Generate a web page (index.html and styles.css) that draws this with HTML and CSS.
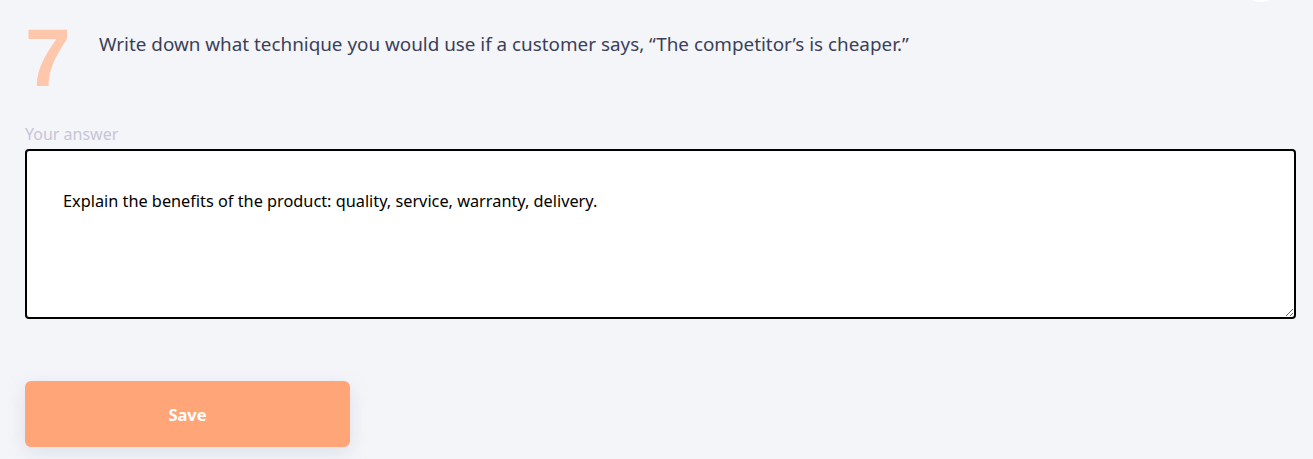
FILE: index.html
```html
<!DOCTYPE html>
<html>
<head>
<meta charset="utf-8">
<link rel="stylesheet" href="styles.css">
</head>
<body>
<div class="page">
  <span class="corner-dot"></span>
  <div class="question">
    <div class="num">7</div>
    <div class="qtext">Write down what technique you would use if a customer says, “The competitor’s is cheaper.”</div>
  </div>
  <label class="label" for="ans">Your answer</label>
  <textarea id="ans" class="answer">Explain the benefits of the product: quality, service, warranty, delivery.</textarea>
  <button class="save">Save</button>
</div>
</body>
</html>
```
FILE: styles.css
```css
html, body {
  margin: 0;
  padding: 0;
  background: #f4f5f9;
}
.page {
  position: relative;
  width: 1313px;
  height: 459px;
  overflow: hidden;
  padding: 0 17px 0 25px;
  box-sizing: border-box;
  font-family: "Noto Sans", "Open Sans", sans-serif;
}
.corner-dot {
  position: absolute;
  left: 1243px;
  top: -34px;
  width: 36px;
  height: 36px;
  border-radius: 50%;
  background: #ffffff;
}
.question {
  display: flex;
  align-items: flex-start;
  padding-top: 16px;
  height: 108px;
  box-sizing: border-box;
}
.num {
  width: 74px;
  font-family: "Liberation Sans", sans-serif;
  font-weight: 700;
  font-size: 82px;
  line-height: 90px;
  color: #fec6ab;
  margin-top: -3px;
  padding-left: 0;
}
.qtext {
  font-size: 18.85px;
  line-height: 24px;
  color: #3b3f58;
  margin-top: 16px;
}
.label {
  display: block;
  font-size: 16px;
  line-height: 40px;
  height: 41px;
  color: #c6c5d6;
  margin-top: 0;
  padding-top: 0;
  position: relative;
  top: 6px;
}
.answer {
  display: block;
  width: 100%;
  height: 170px;
  box-sizing: border-box;
  border: 2px solid #000;
  border-radius: 4px;
  background: #fff;
  padding: 38px 36px;
  font-family: "Noto Sans", sans-serif;
  font-size: 16.3px;
  line-height: 24px;
  color: #000;
  resize: vertical;
  outline: none;
}
.save {
  display: block;
  margin-top: 62px;
  width: 325px;
  height: 66px;
  border: none;
  border-radius: 6px;
  background: #ffa577;
  color: #fff;
  font-family: "Noto Sans", sans-serif;
  font-weight: 700;
  font-size: 16.5px;
  box-shadow: 0 6px 18px rgba(180, 185, 205, 0.35);
}
```
